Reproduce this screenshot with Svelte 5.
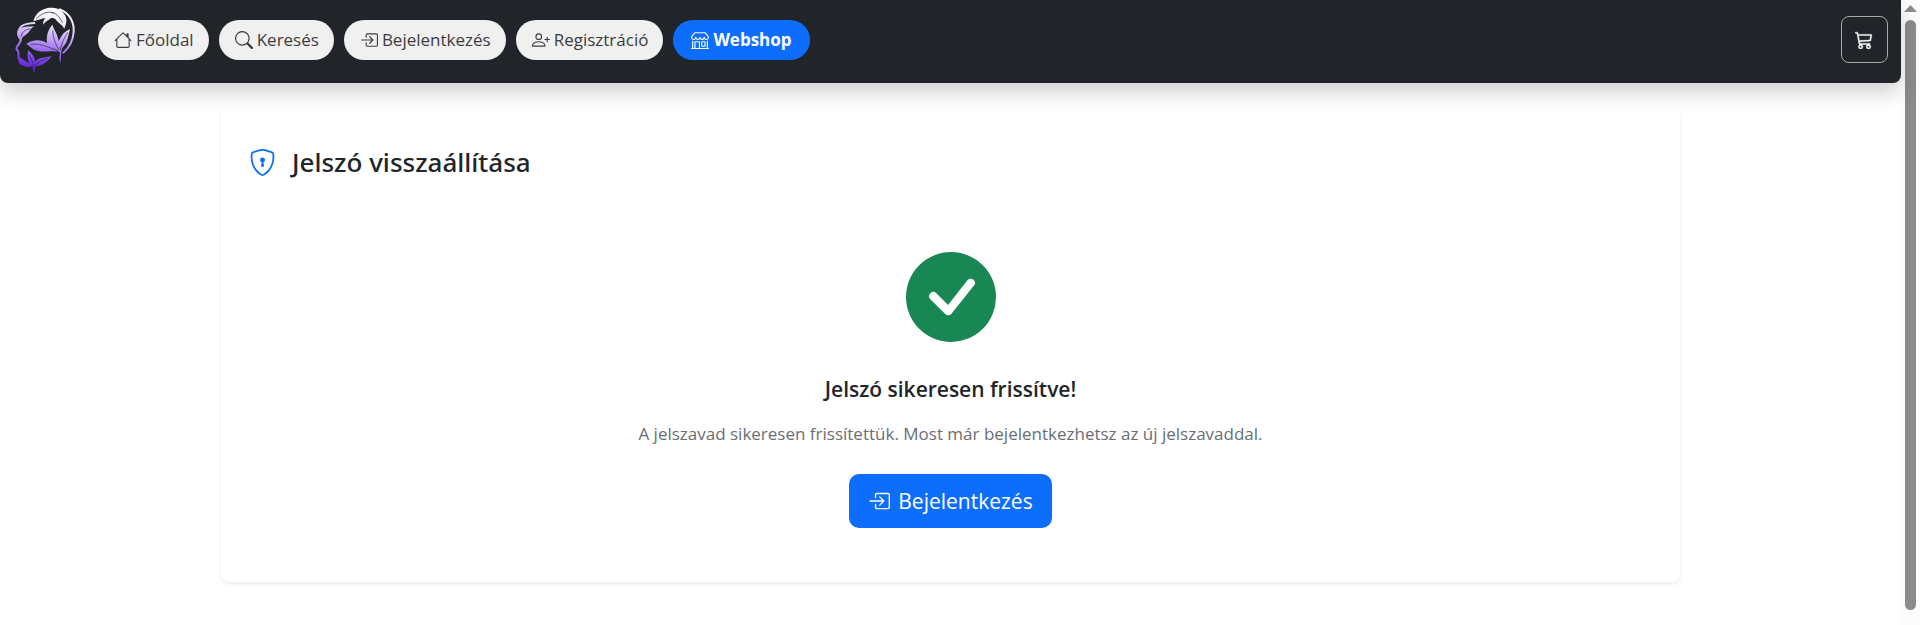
<script>
  const icons = {
    house: ['M8.707 1.5a1 1 0 0 0-1.414 0L.646 8.146a.5.5 0 0 0 .708.708L2 8.207V13.5A1.5 1.5 0 0 0 3.5 15h9a1.5 1.5 0 0 0 1.5-1.5V8.207l.646.647a.5.5 0 0 0 .708-.708L13 5.793V2.5a.5.5 0 0 0-.5-.5h-1a.5.5 0 0 0-.5.5v1.293zM13 7.207V13.5a.5.5 0 0 1-.5.5h-9a.5.5 0 0 1-.5-.5V7.207l5-5z'],
    search: ['M11.742 10.344a6.5 6.5 0 1 0-1.397 1.398h-.001q.044.06.098.115l3.85 3.85a1 1 0 0 0 1.415-1.414l-3.85-3.85a1 1 0 0 0-.115-.1zM12 6.5a5.5 5.5 0 1 1-11 0 5.5 5.5 0 0 1 11 0'],
    login: ['M6 3.5a.5.5 0 0 1 .5-.5h8a.5.5 0 0 1 .5.5v9a.5.5 0 0 1-.5.5h-8a.5.5 0 0 1-.5-.5v-2a.5.5 0 0 0-1 0v2A1.5 1.5 0 0 0 6.5 14h8a1.5 1.5 0 0 0 1.5-1.5v-9A1.5 1.5 0 0 0 14.5 2h-8A1.5 1.5 0 0 0 5 3.5v2a.5.5 0 0 0 1 0z', 'M11.854 8.354a.5.5 0 0 0 0-.708l-3-3a.5.5 0 1 0-.708.708L10.293 7.5H1.5a.5.5 0 0 0 0 1h8.793l-2.147 2.146a.5.5 0 0 0 .708.708z'],
    register: ['M6 8a3 3 0 1 0 0-6 3 3 0 0 0 0 6m2-3a2 2 0 1 1-4 0 2 2 0 0 1 4 0m4 8c0 1-1 1-1 1H1s-1 0-1-1 1-4 6-4 6 3 6 4m-1-.004c-.001-.246-.154-.986-.832-1.664C9.516 10.68 8.289 10 6 10s-3.516.68-4.168 1.332c-.678.678-.83 1.418-.832 1.664z', 'M13.5 5a.5.5 0 0 1 .5.5V7h1.5a.5.5 0 0 1 0 1H14v1.5a.5.5 0 0 1-1 0V8h-1.5a.5.5 0 0 1 0-1H13V5.5a.5.5 0 0 1 .5-.5'],
    shop: ['M2.97 1.35A1 1 0 0 1 3.73 1h8.54a1 1 0 0 1 .76.35l2.609 3.044A1.5 1.5 0 0 1 16 5.37v.255a2.375 2.375 0 0 1-4.25 1.458A2.37 2.37 0 0 1 9.875 8 2.37 2.37 0 0 1 8 7.083 2.37 2.37 0 0 1 6.125 8a2.37 2.37 0 0 1-1.875-.917A2.375 2.375 0 0 1 0 5.625V5.37a1.5 1.5 0 0 1 .361-.976zm1.78 4.275a1.375 1.375 0 0 0 2.75 0 .5.5 0 0 1 1 0 1.375 1.375 0 0 0 2.75 0 .5.5 0 0 1 1 0 1.375 1.375 0 1 0 2.75 0V5.37a.5.5 0 0 0-.12-.325L12.27 2H3.73L1.12 5.045A.5.5 0 0 0 1 5.37v.255a1.375 1.375 0 0 0 2.75 0 .5.5 0 0 1 1 0M1.5 8.5A.5.5 0 0 1 2 9v6h1v-5a1 1 0 0 1 1-1h3a1 1 0 0 1 1 1v5h6V9a.5.5 0 0 1 1 0v6h.5a.5.5 0 0 1 0 1H.5a.5.5 0 0 1 0-1H1V9a.5.5 0 0 1 .5-.5M4 15h3v-5H4zm5-5a1 1 0 0 1 1-1h2a1 1 0 0 1 1 1v3a1 1 0 0 1-1 1h-2a1 1 0 0 1-1-1zm3 0h-2v3h2z'],
    cart: ['M0 1.5A.5.5 0 0 1 .5 1H2a.5.5 0 0 1 .485.379L2.89 3H14.5a.5.5 0 0 1 .49.598l-1 5a.5.5 0 0 1-.465.401l-9.397.472L4.415 11H13a.5.5 0 0 1 0 1H4a.5.5 0 0 1-.491-.408L2.01 3.607 1.61 2H.5a.5.5 0 0 1-.5-.5M3.102 4l.84 4.479 9.144-.459L13.89 4zM5 12a2 2 0 1 0 0 4 2 2 0 0 0 0-4m7 0a2 2 0 1 0 0 4 2 2 0 0 0 0-4m-7 1a1 1 0 1 1 0 2 1 1 0 0 1 0-2m7 0a1 1 0 1 1 0 2 1 1 0 0 1 0-2'],
    shield: ['M5.338 1.59a61 61 0 0 0-2.837.856.48.48 0 0 0-.328.39c-.554 4.157.726 7.19 2.253 9.188a10.7 10.7 0 0 0 2.287 2.233c.346.244.652.42.893.533q.18.085.293.118a1 1 0 0 0 .101.025 1 1 0 0 0 .1-.025q.114-.034.294-.118c.24-.113.547-.29.893-.533a10.7 10.7 0 0 0 2.287-2.233c1.527-1.997 2.807-5.031 2.253-9.188a.48.48 0 0 0-.328-.39c-.651-.213-1.75-.56-2.837-.855C9.552 1.29 8.531 1.067 8 1.067c-.53 0-1.552.223-2.662.524zM5.072.56C6.157.265 7.31 0 8 0s1.843.265 2.928.56c1.11.3 2.229.655 2.887.87a1.54 1.54 0 0 1 1.044 1.262c.596 4.477-.787 7.795-2.465 9.99a11.8 11.8 0 0 1-2.517 2.453 7 7 0 0 1-1.048.625c-.28.132-.581.24-.829.24s-.548-.108-.829-.24a7 7 0 0 1-1.048-.625 11.8 11.8 0 0 1-2.517-2.453C1.928 10.487.545 7.169 1.141 2.692A1.54 1.54 0 0 1 2.185 1.43 63 63 0 0 1 5.072.56', 'M9.5 6.5a1.5 1.5 0 0 1-1 1.415l.385 1.99a.5.5 0 0 1-.491.595h-.788a.5.5 0 0 1-.49-.595l.384-1.99a1.5 1.5 0 1 1 2-1.415'],
    check: ['M16 8A8 8 0 1 1 0 8a8 8 0 0 1 16 0m-3.97-3.03a.75.75 0 0 0-1.08.022L7.477 9.417 5.384 7.323a.75.75 0 0 0-1.06 1.06L6.97 11.03a.75.75 0 0 0 1.079-.02l3.992-4.99a.75.75 0 0 0-.01-1.05z'],
  };

  const links = [
    { label: 'Főoldal', icon: 'house' },
    { label: 'Keresés', icon: 'search' },
    { label: 'Bejelentkezés', icon: 'login' },
    { label: 'Regisztráció', icon: 'register' },
    { label: 'Webshop', icon: 'shop', primary: true },
  ];
</script>

{#snippet icon(name)}
  <svg class="icon" viewBox="0 0 16 16" fill="currentColor" aria-hidden="true">
    {#each icons[name] as d}<path {d} />{/each}
  </svg>
{/snippet}

<div class="window">
  <div class="page">
    <header>
      <a class="brand" href="#home" aria-label="Főoldal">
        <svg viewBox="45 16 186 204" aria-hidden="true">
          <defs>
            <linearGradient id="petal" gradientUnits="userSpaceOnUse" x1="150" y1="20" x2="120" y2="215">
              <stop offset="0" stop-color="#ffffff" />
              <stop offset="0.25" stop-color="#eee6fa" />
              <stop offset="0.55" stop-color="#b48cf5" />
              <stop offset="0.8" stop-color="#7c45ea" />
              <stop offset="1" stop-color="#5a1fc4" />
            </linearGradient>
          </defs>
          <g fill="url(#petal)">
            <path d="M103 62C108 40 124 25 150 21C176 20 190 28 198 44C206 58 201 72 196 84C190 72 181 69 173 60C167 52 160 49 150 57C142 61 137 66 132 72C132 63 134 58 139 52C128 54 117 58 103 62Z" />
            <path d="M183 156C172 146 163 140 148 140C140 122 141 94 160 72C165 90 176 98 179 122C187 105 196 92 213 86C208 103 207 116 201 127C196 136 188 142 187 150L185 186C180 181 181 165 183 156Z" />
            <path d="M82 130C99 116 127 115 143 127C151 133 156 139 177 153C147 149 130 157 109 149C98 145 92 135 82 130Z" />
            <path d="M88 149C96 158 108 166 108 183C121 169 136 172 158 166C147 181 133 195 109 197L106 217C102 213 101 205 101 197C88 191 82 171 88 149Z" />
            <path d="M57 91C63 79 76 78 106 77C94 82 92 95 80 103C72 108 67 112 68 121C58 112 53 103 57 91Z" />
            <path d="M62 170C72 178 87 182 99 197C87 202 75 197 65 190C60 185 61 177 62 170Z" />
          </g>
          <g fill="none" stroke="url(#petal)" stroke-width="6" stroke-linecap="round">
            <path d="M183 26C211 37 226 64 224 94C222 122 209 142 193 156" />
            <path d="M106 67C88 68 66 72 62 84C55 94 56 106 65 117C66 128 50 138 52 145C58 151 60 158 58 166C61 177 60 187 69 191" />
          </g>
          <g fill="none" stroke="#212529" stroke-width="2" stroke-linecap="round">
            <path d="M113 53C132 34 151 31 164 37" />
            <path d="M157 35C170 37 181 47 190 65" />
            <path d="M161 91C162 112 170 133 180 147" />
            <path d="M206 96C197 110 188 125 184 147" />
            <path d="M96 131C117 127 142 136 165 147" />
            <path d="M91 164C97 174 102 186 105 199" />
            <path d="M145 173C131 178 117 184 108 193" />
            <path d="M92 84C78 87 68 95 67 106" />
          </g>
        </svg>
      </a>
      <nav aria-label="Fő navigáció">
        {#each links as link}
          <a class="pill" class:primary={link.primary} href="#{link.icon}">
            {@render icon(link.icon)}<span>{link.label}</span>
          </a>
        {/each}
      </nav>
      <button class="cart" type="button" aria-label="Kosár">{@render icon('cart')}</button>
    </header>

    <main>
      <section class="card">
        <h1>{@render icon('shield')}<span>Jelszó visszaállítása</span></h1>
        <div class="result">
          <div class="badge">{@render icon('check')}</div>
          <h2>Jelszó sikeresen frissítve!</h2>
          <p>A jelszavad sikeresen frissítettük. Most már bejelentkezhetsz az új jelszavaddal.</p>
          <a class="action" href="#login">{@render icon('login')}<span>Bejelentkezés</span></a>
        </div>
      </section>
    </main>
  </div>

  <div class="scrollbar" aria-hidden="true">
    <svg viewBox="0 0 13 7"><path d="M6.500 0L13 7H0Z" fill="#8b8b8b" /></svg>
    <div class="thumb"></div>
  </div>
</div>

<style>
  :global(body) {
    margin: 0;
    background: #fff;
  }

  .window {
    display: grid;
    grid-template-columns: minmax(0, 1fr) 19px;
    min-height: 100vh;
    font-family: 'Open Sans', 'Noto Sans', sans-serif;
    font-size: 17px;
    color: #212529;
  }

  .icon {
    display: block;
    width: 18px;
    height: 18px;
    flex: none;
  }

  header {
    position: relative;
    z-index: 1;
    display: flex;
    align-items: flex-start;
    box-sizing: border-box;
    padding: 5px 13px 8px 14px;
    background: #212529;
    border-radius: 0 0 8px 8px;
    box-shadow: 0 10px 20px rgba(0, 0, 0, 0.18);
  }

  .brand svg {
    display: block;
    width: 62px;
    height: 70px;
  }

  nav {
    display: flex;
    flex: 1;
    gap: 10px;
    padding: 15px 0 0 22px;
  }

  .pill {
    display: flex;
    align-items: center;
    gap: 4px;
    height: 40px;
    padding: 0 15px 0 16px;
    border-radius: 20px;
    background: #f0f0f0;
    color: #3c3c3c;
    line-height: 24px;
    text-decoration: none;
    white-space: nowrap;
  }

  .pill.primary {
    padding: 0 18px;
    background: #0d6efd;
    color: #fff;
    font-weight: 700;
  }

  .cart {
    display: grid;
    place-items: center;
    width: 47px;
    height: 47px;
    margin-top: 11px;
    padding: 0 2px 0 0;
    border: 1px solid #a6a8aa;
    border-radius: 8px;
    background: transparent;
    color: #fff;
  }

  .cart .icon {
    stroke: currentColor;
    stroke-width: 0.4px;
  }

  main {
    padding: 24px 24px 42px;
  }

  .card {
    box-sizing: border-box;
    max-width: 1459px;
    margin: 0 auto;
    padding: 39px 28px 54px;
    border-radius: 8px;
    background: #fff;
    box-shadow: 0 2px 5px rgba(0, 0, 0, 0.08);
  }

  h1 {
    display: flex;
    align-items: center;
    gap: 16px;
    margin: 0;
    font-family: 'Noto Sans', 'Open Sans', sans-serif;
    font-size: 26px;
    font-weight: 500;
    line-height: 32px;
  }

  h1 .icon {
    width: 27px;
    height: 27px;
    color: #0d6efd;
  }

  .result {
    display: flex;
    flex-direction: column;
    align-items: center;
    padding-top: 74px;
    text-align: center;
  }

  .badge {
    color: #198754;
  }

  .badge .icon {
    width: 90px;
    height: 90px;
  }

  h2 {
    margin: 32px 0 0;
    font-size: 21px;
    font-weight: 600;
    line-height: 30px;
  }

  p {
    margin: 17px 0 0;
    color: #6a6e72;
    line-height: 26px;
  }

  .action {
    display: flex;
    align-items: center;
    gap: 8px;
    height: 54px;
    margin-top: 27px;
    padding: 0 19px;
    border-radius: 10px;
    background: #0d6efd;
    color: #fff;
    font-size: 21px;
    text-decoration: none;
  }

  .action .icon {
    width: 22px;
    height: 22px;
  }

  .scrollbar {
    display: flex;
    flex-direction: column;
    align-items: center;
    gap: 8px;
    box-sizing: border-box;
    padding: 5px 0 15px;
    background: #fcfcfc;
  }

  .scrollbar svg {
    display: block;
    width: 13px;
    height: 7px;
  }

  .thumb {
    flex: 1;
    width: 11px;
    border-radius: 6px;
    background: #8b8b8b;
  }
</style>
